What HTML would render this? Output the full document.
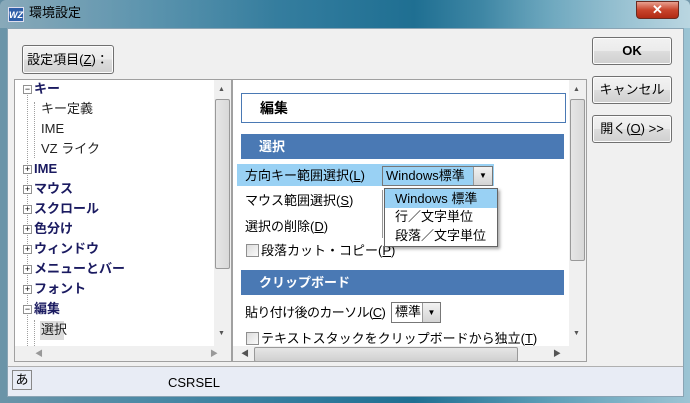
<!DOCTYPE html>
<html><head><meta charset="utf-8"><style>
*{margin:0;padding:0;box-sizing:border-box}
body{width:690px;height:403px;overflow:hidden;background:#3a6f8a;font-family:"Liberation Sans","Noto Sans CJK JP",sans-serif;font-size:13px;color:#000;position:relative}
.a{position:absolute}
.t{position:absolute;white-space:nowrap;line-height:16px}
.btn{position:absolute;border:1px solid #707070;border-radius:3px;background:linear-gradient(#f2f2f2 0%,#ebebeb 50%,#dddddd 51%,#cfcfcf 100%);text-align:center;box-shadow:inset 0 0 0 1px #fcfcfc}
.tree .t{color:#1a1a60;font-weight:bold}
.tree .s{font-weight:normal;color:#222;}
.pm{position:absolute;width:9px;height:9px;border:1px solid #919191;background:#fff;font-size:9px;line-height:7px;text-align:center;color:#000}
.hdr{position:absolute;background:#4a79b4;color:#fff;font-weight:bold;height:25px;line-height:25px;padding-left:18px}
.cb{position:absolute;width:13px;height:13px;border:1px solid #8f8f8f;background:linear-gradient(135deg,#dcdcdc,#fafafa)}
u{text-decoration:underline}
</style></head><body>
<div class="a" style="left:0;top:0;width:690px;height:403px;background:linear-gradient(90deg,#6b94a8 0%,#4d8aa6 20%,#2f7a9c 45%,#1f6f92 60%,#5f9fb8 80%,#9cc4d4 100%);border-radius:6px 6px 0 0"></div>
<div class="a" style="left:0;top:0;width:690px;height:28px;background:linear-gradient(90deg,rgba(255,255,255,0.2),rgba(255,255,255,0) 40%,rgba(255,255,255,0) 70%,rgba(255,255,255,0.3))"></div>
<div class="a" style="left:8px;top:7px;width:16px;height:15px;background:#2f5fa8;color:#fff;font-size:9px;font-weight:bold;font-style:italic;line-height:15px;text-align:center;border:1px solid #dde">WZ</div>
<div class="t" style="left:29px;top:5px;font-size:13px;color:#000">環境設定</div>
<div class="a" style="left:636px;top:1px;width:43px;height:18px;border:1px solid #6b2a20;border-radius:0 0 4px 4px;background:linear-gradient(#e8a090,#c8442c 50%,#b02a14);color:#fff;font-weight:bold;text-align:center;line-height:16px;font-size:13px">✕</div>
<div class="a" style="left:7px;top:28px;width:677px;height:369px;background:#f0f0f0;border:1px solid #8aa4b4"></div>
<div class="btn" style="left:22px;top:45px;width:92px;height:29px;line-height:27px">設定項目(<u>Z</u>)：</div>
<div class="btn" style="left:592px;top:37px;width:80px;height:28px;line-height:26px;font-weight:bold">OK</div>
<div class="btn" style="left:592px;top:76px;width:80px;height:28px;line-height:26px">キャンセル</div>
<div class="btn" style="left:592px;top:115px;width:80px;height:28px;line-height:26px">開く(<u>O</u>) &gt;&gt;</div>
<div class="a tree" style="left:14px;top:79px;width:218px;height:283px;background:#fff;border:1px solid #a0a0a0;overflow:hidden">
 <div class="a" style="left:12px;top:10px;height:260px;border-left:1px dotted #a0a0a0"></div>
 <div class="a" style="left:19px;top:22px;height:56px;border-left:1px dotted #a0a0a0"></div>
 <div class="a" style="left:19px;top:240px;height:30px;border-left:1px dotted #a0a0a0"></div>
 <div class="pm" style="left:8px;top:5px">−</div><div class="t" style="left:19px;top:1px">キー</div>
 <div class="t s" style="left:26px;top:21px">キー定義</div>
 <div class="t s" style="left:26px;top:41px">IME</div>
 <div class="t s" style="left:26px;top:61px">VZ ライク</div>
 <div class="pm" style="left:8px;top:85px">+</div><div class="t" style="left:19px;top:81px">IME</div>
 <div class="pm" style="left:8px;top:105px">+</div><div class="t" style="left:19px;top:101px">マウス</div>
 <div class="pm" style="left:8px;top:125px">+</div><div class="t" style="left:19px;top:121px">スクロール</div>
 <div class="pm" style="left:8px;top:145px">+</div><div class="t" style="left:19px;top:141px">色分け</div>
 <div class="pm" style="left:8px;top:165px">+</div><div class="t" style="left:19px;top:161px">ウィンドウ</div>
 <div class="pm" style="left:8px;top:185px">+</div><div class="t" style="left:19px;top:181px">メニューとバー</div>
 <div class="pm" style="left:8px;top:205px">+</div><div class="t" style="left:19px;top:201px">フォント</div>
 <div class="pm" style="left:8px;top:225px">−</div><div class="t" style="left:19px;top:221px">編集</div>
 <div class="a" style="left:25px;top:241px;width:24px;height:19px;background:#dcdcdc"></div>
 <div class="t s" style="left:26px;top:242px">選択</div>
 <div class="a" style="left:199px;top:0;width:17px;height:266px;background:#f0f0f0"></div>
 <div class="a" style="left:203px;top:6px;font-size:7px;color:#555">▲</div>
 <div class="a" style="left:200px;top:19px;width:15px;height:170px;border:1px solid #999;border-radius:2px;background:linear-gradient(90deg,#e6e6e6,#d8d8d8)"></div>
 <div class="a" style="left:203px;top:250px;font-size:7px;color:#555">▼</div>
 <div class="a" style="left:0;top:266px;width:216px;height:16px;background:#f0f0f0"></div>
 <div class="a" style="left:20px;top:268px;font-size:8px;color:#999">◀</div>
 <div class="a" style="left:195px;top:268px;font-size:8px;color:#999">▶</div>
</div>
<div class="a" style="left:232px;top:79px;width:355px;height:283px;background:#fff;border:1px solid #a0a0a0;overflow:hidden">
 <div class="a" style="left:8px;top:13px;width:325px;height:30px;border:1px solid #4a79b4;font-weight:bold;padding-left:18px;line-height:28px;font-size:14px">編集</div>
 <div class="hdr" style="left:8px;top:54px;width:323px">選択</div>
 <div class="a" style="left:4px;top:84px;width:257px;height:22px;background:#99d1f4"></div>
 <div class="t" style="left:12px;top:88px">方向キー範囲選択(<u>L</u>)</div>
 <div class="a" style="left:149px;top:86px;width:111px;height:20px;border:1px solid #777;background:#99d1f4"></div>
 <div class="t" style="left:153px;top:88px">Windows標準</div>
 <div class="a" style="left:240px;top:87px;width:19px;height:18px;border-left:1px solid #999;background:linear-gradient(#f2f2f2,#d4d4d4);font-size:8px;text-align:center;line-height:18px">▼</div>
 <div class="t" style="left:12px;top:113px">マウス範囲選択(<u>S</u>)</div>
 <div class="a" style="left:149px;top:110px;width:3px;height:48px;border-left:1px solid #999"></div>
 <div class="t" style="left:12px;top:139px">選択の削除(<u>D</u>)</div>
 <div class="cb" style="left:13px;top:164px"></div>
 <div class="t" style="left:28px;top:163px">段落カット・コピー(<u>P</u>)</div>
 <div class="hdr" style="left:8px;top:190px;width:323px">クリップボード</div>
 <div class="t" style="left:12px;top:225px;letter-spacing:-0.6px">貼り付け後のカーソル(<u>C</u>)</div>
 <div class="a" style="left:158px;top:222px;width:50px;height:21px;border:1px solid #777;background:#fff"></div>
 <div class="t" style="left:162px;top:224px">標準</div>
 <div class="a" style="left:189px;top:223px;width:18px;height:19px;border-left:1px solid #999;background:linear-gradient(#f2f2f2,#d4d4d4);font-size:8px;text-align:center;line-height:19px">▼</div>
 <div class="cb" style="left:13px;top:252px"></div>
 <div class="t" style="left:28px;top:251px">テキストスタックをクリップボードから独立(<u>T</u>)</div>
 <div class="a" style="left:336px;top:0;width:17px;height:266px;background:#f0f0f0"></div>
 <div class="a" style="left:340px;top:6px;font-size:7px;color:#555">▲</div>
 <div class="a" style="left:337px;top:19px;width:15px;height:162px;border:1px solid #999;border-radius:2px;background:linear-gradient(90deg,#e6e6e6,#d8d8d8)"></div>
 <div class="a" style="left:340px;top:250px;font-size:7px;color:#555">▼</div>
 <div class="a" style="left:0;top:266px;width:353px;height:16px;background:#f0f0f0"></div>
 <div class="a" style="left:8px;top:268px;font-size:8px;color:#555">◀</div>
 <div class="a" style="left:21px;top:267px;width:264px;height:15px;border:1px solid #999;border-radius:2px;background:linear-gradient(#e6e6e6,#d0d0d0)"></div>
 <div class="a" style="left:320px;top:268px;font-size:8px;color:#555">▶</div>
</div>
<div class="a" style="left:384px;top:188px;width:114px;height:59px;background:#fff;border:1px solid #646464;box-shadow:2px 2px 3px rgba(0,0,0,0.35)">
 <div class="a" style="left:0;top:0;width:112px;height:19px;background:#99d1f4"></div>
 <div class="t" style="left:10px;top:2px">Windows 標準</div>
 <div class="t" style="left:10px;top:20px">行／文字単位</div>
 <div class="t" style="left:10px;top:39px">段落／文字単位</div>
</div>
<div class="a" style="left:8px;top:366px;width:675px;height:30px;background:#e8ecf5;border-top:1px solid #b0b0b0"></div>
<div class="a" style="left:12px;top:370px;width:20px;height:20px;border:1px solid #888;text-align:center;line-height:18px">あ</div>
<div class="t" style="left:168px;top:375px">CSRSEL</div>
</body></html>
